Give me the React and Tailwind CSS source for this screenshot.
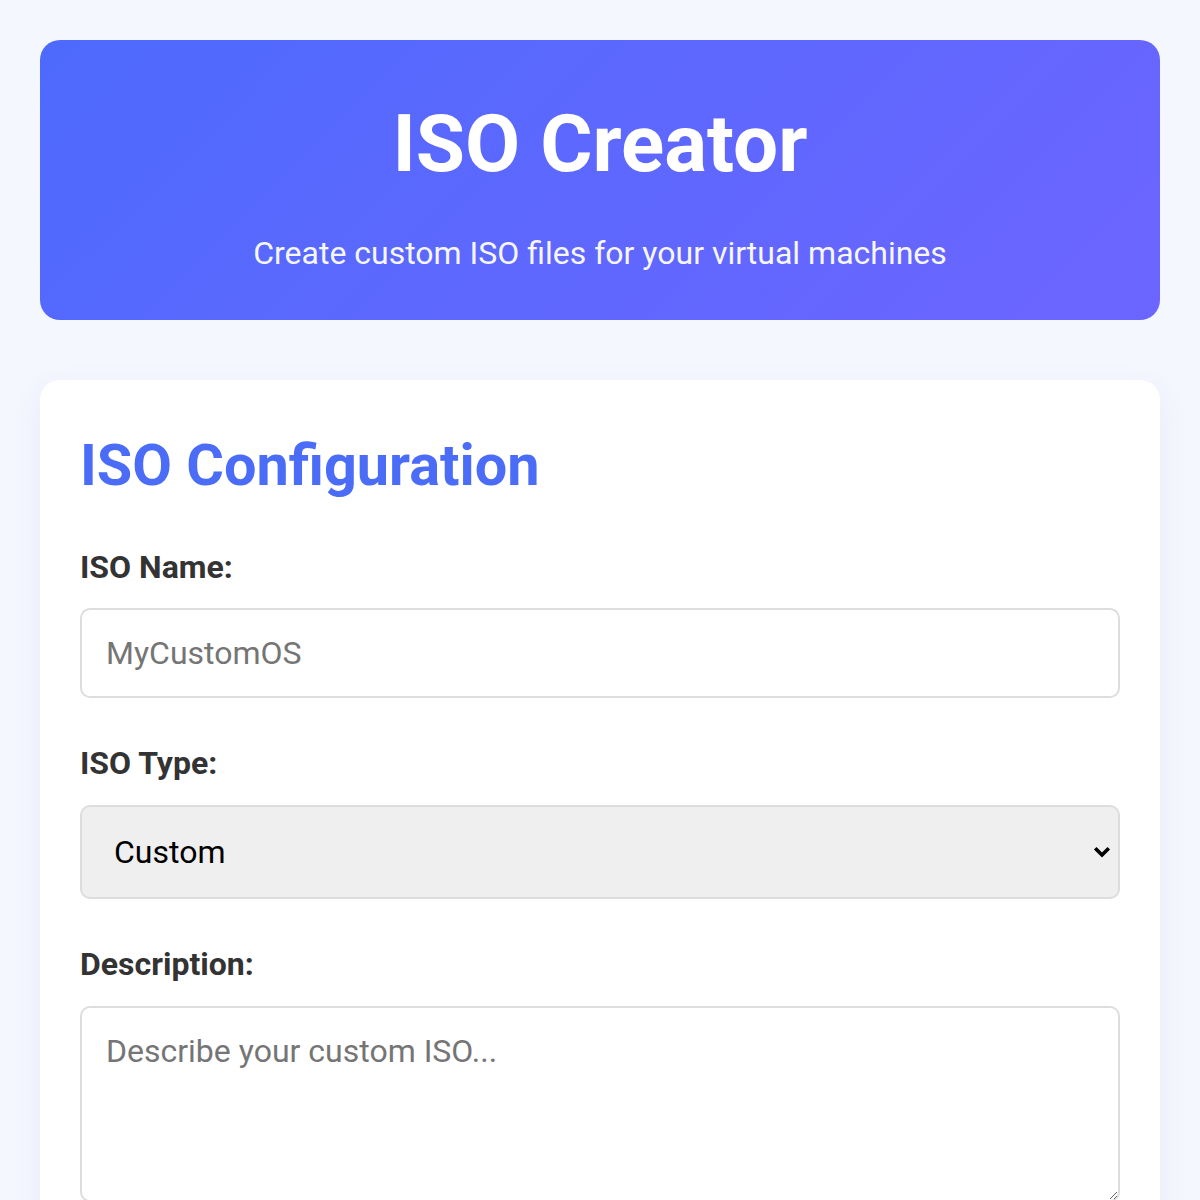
export default function App() {
    return (
        <div className="min-h-screen bg-[#f5f7ff] p-10 font-['Roboto',sans-serif] leading-[1.6] text-[#333]">
            <header className="rounded-[20px] bg-linear-135 from-[#4d6afd] to-[#6c65ff] px-10 pt-10 pb-[41px] text-center text-white">
                <h1 className="mb-5 text-[80px] font-bold leading-[1.6]">ISO Creator</h1>
                <p className="text-[32px] opacity-95">Create custom ISO files for your virtual machines</p>
            </header>

            <main className="mt-[60px] rounded-[20px] bg-white p-10 shadow-[0_10px_30px_rgba(70,80,160,0.08)]">
                <h2 className="mb-[30px] text-[57.6px] font-bold text-[#4a6cf7]">ISO Configuration</h2>

                <div className="mb-10">
                    <label className="mb-[14px] block text-[32px] font-bold">ISO Name:</label>
                    <input
                        type="text"
                        placeholder="MyCustomOS"
                        className="block h-[90px] w-full rounded-[10px] border-2 border-[#ddd] px-6 text-[32px] leading-normal placeholder:text-[#757575]"
                    />
                </div>

                <div className="mb-10">
                    <label className="mb-4 block text-[32px] font-bold">ISO Type:</label>
                    <div className="relative">
                        <select className="block h-[94px] w-full appearance-none rounded-[10px] border-2 border-[#ddd] bg-[#efefef] pr-16 pl-[32px] text-[32px] leading-normal text-black">
                            <option>Custom</option>
                            <option>Linux</option>
                            <option>Windows</option>
                        </select>
                        <svg
                            className="pointer-events-none absolute top-1/2 right-[8px] h-5 w-5 -translate-y-1/2"
                            viewBox="0 0 20 20"
                            fill="none"
                            stroke="#000"
                            strokeWidth="3.6"
                            strokeLinecap="square"
                        >
                            <path d="M4.5 7.5 L10 13 L15.5 7.5" />
                        </svg>
                    </div>
                </div>

                <div className="mb-10">
                    <label className="mb-4 block text-[32px] font-bold">Description:</label>
                    <textarea
                        placeholder="Describe your custom ISO..."
                        className="block h-[196px] w-full rounded-[10px] border-2 border-[#ddd] px-6 pt-[19px] pb-6 text-[32px] leading-normal placeholder:text-[#757575]"
                    />
                </div>
            </main>
        </div>
    );
}
